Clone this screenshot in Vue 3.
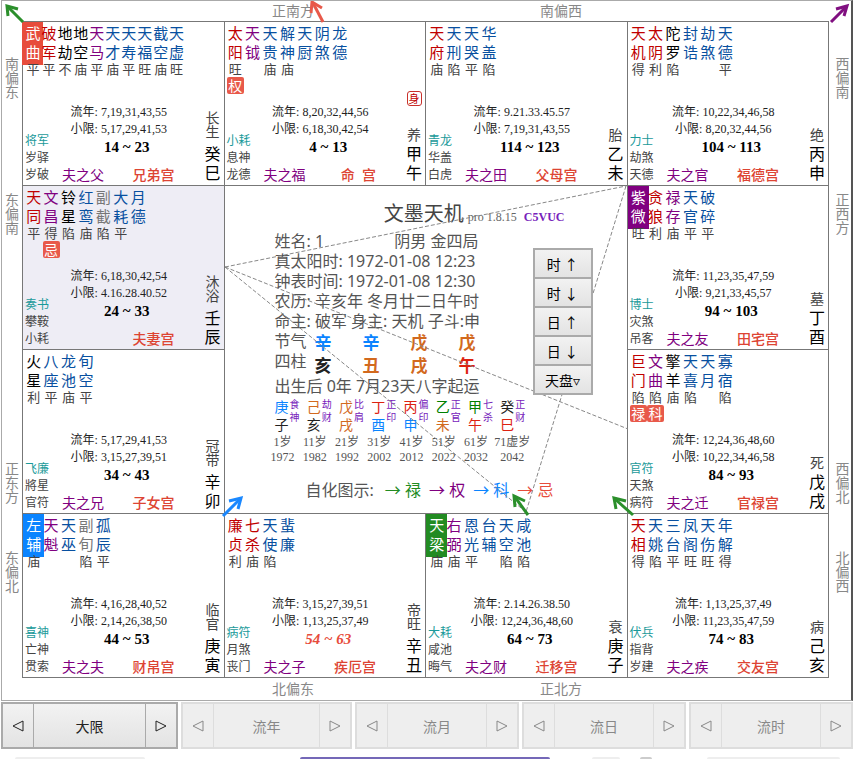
<script setup>
const parseStars = (text) =>
  text.split(' ').map((item) => {
    const [name, level, tone, mark] = item.split('/')
    return { chars: [...name], level, tone, mark }
  })

const palaces = [
  { area: 'si', stars: '武曲/平/hot-red 破军/平/red 地劫/不/black 地空/庙/black 天马/平/purple 天才/庙/blue 天寿/平/blue 天福/旺/blue 截空/庙/blue 天虚/旺/blue', years: '7,19,31,43,55', limits: '5,17,29,41,53', range: '14 ~ 23', gods: ['将军', '岁驿', '岁破'], relation: '夫之父', name: '兄弟宫', stage: '长生', stem: '癸巳' },
  { area: 'wu', stars: '太阳/旺/red/权 天钺//purple 天贵/庙/blue 解神/庙/blue 天厨//blue 阴煞//blue 龙德//blue', years: '8,20,32,44,56', limits: '6,18,30,42,54', range: '4 ~ 13', gods: ['小耗', '息神', '龙德'], relation: '夫之福', name: '命\u00a0\u00a0宫', stage: '养', stem: '甲午', body: true },
  { area: 'wei', stars: '天府/庙/red 天刑/陷/blue 天哭/平/blue 华盖/陷/blue', years: '9.21.33.45.57', limits: '7,19,31,43,55', range: '114 ~ 123', gods: ['青龙', '华盖', '白虎'], relation: '夫之田', name: '父母宫', stage: '胎', stem: '乙未' },
  { area: 'shen', stars: '天机/得/red 太阴/利/red 陀罗/陷/black 封诰//blue 劫煞//blue 天德/平/blue', years: '10,22,34,46,58', limits: '8,20,32,44,56', range: '104 ~ 113', gods: ['力士', '劫煞', '天德'], relation: '夫之官', name: '福德宫', stage: '绝', stem: '丙申' },
  { area: 'chen', stars: '天同/平/red 文昌/得/purple/忌 铃星/陷/black 红鸾/庙/blue 副截/陷/gray 大耗/平/blue 月德//blue', years: '6,18,30,42,54', limits: '4.16.28.40.52', range: '24 ~ 33', gods: ['奏书', '攀鞍', '小耗'], relation: '', name: '夫妻宫', stage: '沐浴', stem: '壬辰', active: true },
  { area: 'you', stars: '紫微/旺/hot-purple 贪狼/利/red 禄存/庙/purple 天官/平/blue 破碎/平/blue', years: '11,23,35,47,59', limits: '9,21,33,45,57', range: '94 ~ 103', gods: ['博士', '灾煞', '吊客'], relation: '夫之友', name: '田宅宫', stage: '墓', stem: '丁酉' },
  { area: 'mao', stars: '火星/利/black 八座/平/blue 龙池/庙/blue 旬空/平/blue', years: '5,17,29,41,53', limits: '3,15,27,39,51', range: '34 ~ 43', gods: ['飞廉', '將星', '官符'], relation: '夫之兄', name: '子女宫', stage: '冠带', stem: '辛卯' },
  { area: 'xu', stars: '巨门/陷/red/禄 文曲/陷/purple/科 擎羊/庙/black 天喜/陷/blue 天月//blue 寡宿/陷/blue', years: '12,24,36,48,60', limits: '10,22,34,46,58', range: '84 ~ 93', gods: ['官符', '天煞', '病符'], relation: '夫之迁', name: '官禄宫', stage: '死', stem: '戊戌' },
  { area: 'yin', stars: '左辅/庙/hot-blue 天魁//purple 天巫//blue 副旬/陷/gray 孤辰/平/blue', years: '4,16,28,40,52', limits: '2,14,26,38,50', range: '44 ~ 53', gods: ['喜神', '亡神', '贯索'], relation: '夫之夫', name: '财帛宫', stage: '临官', stem: '庚寅' },
  { area: 'chou', stars: '廉贞/利/red 七杀/庙/red 天使/陷/blue 蜚廉//blue', years: '3,15,27,39,51', limits: '1,13,25,37,49', range: '54 ~ 63', gods: ['病符', '月煞', '丧门'], relation: '夫之子', name: '疾厄宫', stage: '帝旺', stem: '辛丑', current: true },
  { area: 'zi', stars: '天梁/庙/hot-green 右弼/庙/purple 恩光/平/blue 台辅//blue 天空/陷/blue 咸池/陷/blue', years: '2.14.26.38.50', limits: '12,24,36,48,60', range: '64 ~ 73', gods: ['大耗', '咸池', '晦气'], relation: '夫之财', name: '迁移宫', stage: '衰', stem: '庚子' },
  { area: 'hai', stars: '天相/得/red 天姚/陷/blue 三台/平/blue 凤阁/旺/blue 天伤/旺/blue 年解/得/blue', years: '1,13,25,37,49', limits: '11,23,35,47,59', range: '74 ~ 83', gods: ['伏兵', '指背', '岁建'], relation: '夫之疾', name: '交友宫', stage: '病', stem: '己亥' },
].map((p) => ({ ...p, stars: parseStars(p.stars) }))

const pillars = [
  [['辛', 'metal'], ['亥', 'water']],
  [['辛', 'metal'], ['丑', 'earth']],
  [['戊', 'earth'], ['戌', 'earth']],
  [['戊', 'earth'], ['午', 'fire']],
]

const cycles = [
  { stem: ['庚', 'metal'], branch: ['子', 'water'], god: '食神', age: '1岁', year: 1972 },
  { stem: ['己', 'earth'], branch: ['亥', 'water'], god: '劫财', age: '11岁', year: 1982 },
  { stem: ['戊', 'earth'], branch: ['戌', 'earth'], god: '比肩', age: '21岁', year: 1992 },
  { stem: ['丁', 'fire'], branch: ['酉', 'metal'], god: '正印', age: '31岁', year: 2002 },
  { stem: ['丙', 'fire'], branch: ['申', 'metal'], god: '偏印', age: '41岁', year: 2012 },
  { stem: ['乙', 'wood'], branch: ['未', 'earth'], god: '正官', age: '51岁', year: 2022 },
  { stem: ['甲', 'wood'], branch: ['午', 'fire'], god: '七杀', age: '61岁', year: 2032 },
  { stem: ['癸', 'water'], branch: ['巳', 'fire'], god: '正财', age: '71虚岁', year: 2042 },
]

const adjusters = ['时 ↑', '时 ↓', '日 ↑', '日 ↓', '天盘▿']
const periods = ['大限', '流年', '流月', '流日', '流时']
const leftSides = ['南偏东', '东偏南', '正东方', '东偏北']
const rightSides = ['西偏南', '正西方', '西偏北', '北偏西']

const arrows = [
  { color: '#2b8f2b', line: 'M23 22L8 7', head: 'M8 16L7 6L18 9' },
  { color: '#e8594a', line: 'M323 22L313 3', head: 'M311 13L312 2L322 8' },
  { color: '#800f80', line: 'M831 22L846 7', head: 'M836 9L847 6L844 16' },
  { color: '#1a88ff', line: 'M223 516L240 499', head: 'M229 501L241 498L238 509' },
  { color: '#2b8f2b', line: 'M528 515L515 497', head: 'M515 507L514 496L525 501' },
  { color: '#2b8f2b', line: 'M633 515L615 499', head: 'M616 509L614 498L626 501' },
]
</script>

<template>
  <main class="page">
    <section class="board">
      <div class="edge edge-top"><span>正南方</span><span>南偏西</span></div>
      <div class="side side-left"><span v-for="s in leftSides" :key="s">{{ s }}</span></div>

      <div class="chart">
        <article v-for="p in palaces" :key="p.area" class="palace" :class="[p.area, { active: p.active }]">
          <div class="stars" :class="{ dense: p.stars.length > 9 }">
            <div v-for="(s, i) in p.stars" :key="i" class="star">
              <div class="star-name" :class="s.tone"><span v-for="(c, n) in s.chars" :key="n">{{ c }}</span></div>
              <span class="level">{{ s.level }}</span>
              <span v-if="s.mark" class="mark">{{ s.mark }}</span>
            </div>
          </div>
          <div class="foot">
            <div class="gods"><span v-for="g in p.gods" :key="g">{{ g }}</span></div>
            <div class="middle">
              <div class="dates"><span>流年: {{ p.years }}</span><span>小限: {{ p.limits }}</span></div>
              <div class="range" :class="{ current: p.current }">{{ p.range }}</div>
              <div class="names"><span class="relation">{{ p.relation }}</span><span class="palace-name">{{ p.name }}</span></div>
            </div>
            <div class="pole">
              <span v-if="p.body" class="body-mark">身</span>
              <span class="stage" :class="{ pair: p.stage.length > 1 }">{{ p.stage }}</span>
              <span class="stem">{{ p.stem }}</span>
            </div>
          </div>
        </article>

        <section class="center">
          <header class="title">
            <h1>文墨天机</h1><small>pro 1.8.15</small><strong>C5VUC</strong>
          </header>
          <div class="center-body">
            <div class="info">
              <p class="split"><span>姓名: 1</span><span>阴男 金四局</span></p>
              <p>真太阳时: 1972-01-08 12:23</p>
              <p>钟表时间: 1972-01-08 12:30</p>
              <p>农历: 辛亥年 冬月廿二日午时</p>
              <p>命主: 破军 身主: 天机 子斗:申</p>
              <div class="pillars">
                <div class="pillar-label"><span>节气</span><span>四柱</span></div>
                <div v-for="(p, i) in pillars" :key="i" class="pillar">
                  <span v-for="(c, n) in p" :key="n" :class="c[1]">{{ c[0] }}</span>
                </div>
              </div>
              <p>出生后 0年 7月23天八字起运</p>
              <div class="cycles">
                <div v-for="c in cycles" :key="c.year" class="cycle">
                  <div class="cycle-top">
                    <div class="cycle-pair"><span :class="c.stem[1]">{{ c.stem[0] }}</span><span :class="c.branch[1]">{{ c.branch[0] }}</span></div>
                    <span class="cycle-god">{{ c.god }}</span>
                  </div>
                  <span class="cycle-age">{{ c.age }}</span>
                  <span class="cycle-age">{{ c.year }}</span>
                </div>
              </div>
            </div>
            <div class="adjust">
              <button v-for="a in adjusters" :key="a" type="button">{{ a }}</button>
            </div>
          </div>
          <div class="legend">
            <span class="legend-label">自化图示:</span>
            <span class="lu">→ 禄</span><span class="quan">→ 权</span><span class="ke">→ 科</span><span class="ji">→ 忌</span>
          </div>
        </section>
      </div>

      <div class="side side-right"><span v-for="s in rightSides" :key="s">{{ s }}</span></div>
      <div class="edge edge-bottom"><span>北偏东</span><span>正北方</span></div>

      <svg class="overlay" viewBox="2 1 849 699" preserveAspectRatio="none" aria-hidden="true">
        <g fill="none" stroke="#888" stroke-width="1" stroke-dasharray="4 2">
          <path d="M225 267L626 186" />
          <path d="M225 267L628 429" />
          <path d="M225 267L526 512" />
          <path d="M626 186L526 512" />
        </g>
        <g v-for="(a, i) in arrows" :key="i" fill="none" :stroke="a.color" stroke-width="3">
          <path :d="a.line" /><path :d="a.head" />
        </g>
      </svg>
    </section>

    <nav class="periods">
      <div v-for="(p, i) in periods" :key="p" class="period">
        <button type="button" class="step" :disabled="i > 0" :aria-label="p + ' -'">
          <svg viewBox="0 0 12 14"><path d="M11 2L1 7L11 12Z" /></svg>
        </button>
        <button type="button" class="period-name" :disabled="i > 0">{{ p }}</button>
        <button type="button" class="step" :disabled="i > 0" :aria-label="p + ' +'">
          <svg viewBox="0 0 12 14"><path d="M1 2L11 7L1 12Z" /></svg>
        </button>
      </div>
    </nav>
    <div class="tabs"><i class="tab-a"></i><i class="tab-b"></i><i class="tab-c"></i><i class="tab-d"></i><i class="tab-e"></i></div>
  </main>
</template>

<style>
body {
  background: #fff;
  overflow: hidden;
}
</style>

<style scoped>
* {
  box-sizing: border-box;
}
.page {
  font-family: "Noto Sans", "Noto Sans CJK SC", sans-serif;
  font-weight: 400;
  color: #444;
  padding-left: 1px;
}
.board {
  position: relative;
  display: grid;
  grid-template-columns: 20px minmax(0, 1fr) 22px;
  grid-template-rows: 20px auto 22px;
  border: 1px solid #aaa;
  border-right: 2px solid #555;
}
.edge {
  grid-column: 2;
  display: grid;
  grid-template-columns: 1fr 2fr 2fr 1fr;
  align-items: center;
  padding-left: 3px;
  text-align: center;
  font-size: 14px;
  line-height: 20px;
  color: #888;
}
.edge span:first-child {
  grid-column: 2;
}
.side {
  grid-row: 2;
  display: flex;
  flex-direction: column;
  align-items: center;
  padding-top: 36px;
  font-size: 14px;
  line-height: 14px;
  color: #888;
}
.side-left {
  grid-column: 1;
}
.side-right {
  grid-column: 3;
  padding-left: 5px;
}
.side span {
  width: 14px;
  word-break: break-all;
}
.side span:nth-child(2) {
  margin-top: 94px;
}
.side span:nth-child(3) {
  margin-top: 227px;
}
.side span:nth-child(4) {
  margin-top: 47px;
}
.edge-bottom {
  grid-row: 3;
}
.chart {
  grid-row: 2;
  grid-column: 2;
  display: grid;
  grid-template-columns: repeat(4, minmax(0, 1fr));
  grid-auto-rows: minmax(163px, auto);
  grid-template-areas:
    "si wu wei shen"
    "chen mid mid you"
    "mao mid mid xu"
    "yin chou zi hai";
  gap: 1px;
  padding: 1px;
  background: #777;
}
.si { grid-area: si; }
.wu { grid-area: wu; }
.wei { grid-area: wei; }
.shen { grid-area: shen; }
.chen { grid-area: chen; }
.you { grid-area: you; }
.mao { grid-area: mao; }
.xu { grid-area: xu; }
.yin { grid-area: yin; }
.chou { grid-area: chou; }
.zi { grid-area: zi; }
.hai { grid-area: hai; }
.palace {
  display: flex;
  flex-direction: column;
  justify-content: space-between;
  background: #fff;
  isolation: isolate;
}
.palace.active {
  background: #eeedf5;
}
.stars {
  display: grid;
  grid-template-columns: repeat(11, minmax(0, 1fr));
  padding: 2px 7px 0 2px;
}
.stars.dense {
  grid-template-columns: repeat(12, minmax(0, 1fr));
}
.star {
  position: relative;
  display: flex;
  flex-direction: column;
  align-items: center;
}
.star-name {
  position: relative;
  display: flex;
  flex-direction: column;
  font-size: 15px;
  line-height: 19px;
}
.level {
  height: 15px;
  font-size: 13px;
  line-height: 15px;
  color: #444;
}
.mark {
  position: absolute;
  top: 100%;
  width: 17px;
  height: 17px;
  border-radius: 2px;
  background: #e8594a;
  color: #fff;
  font-size: 14px;
  line-height: 17px;
  text-align: center;
}
.red { color: #c00000; }
.black { color: #000; }
.purple { color: #800080; }
.blue { color: #0850a0; }
.gray { color: #777; }
[class*="hot-"] {
  color: #fff;
}
[class*="hot-"]::before {
  content: "";
  position: absolute;
  z-index: -1;
  top: -2px;
  left: -3px;
  width: 21px;
  height: 43px;
}
.hot-red::before { background: #e74c3c; }
.hot-purple::before { background: #800080; }
.hot-blue::before { background: #0a84ff; }
.hot-green::before { background: #228b22; }
.foot {
  display: flex;
  align-items: flex-end;
  padding: 0 3px 0 2px;
}
.gods {
  display: flex;
  flex-direction: column;
  flex: 0 0 24px;
  padding-bottom: 2px;
  font-size: 12px;
  line-height: 17px;
}
.gods span:first-child {
  color: #1a9a9a;
}
.middle {
  flex: 1;
  text-align: center;
}
.dates {
  display: flex;
  flex-direction: column;
  padding-right: 16px;
  font-family: "Liberation Serif", "Noto Sans CJK SC", serif;
  font-size: 12px;
  line-height: 17px;
  color: #222;
}
.range {
  margin-bottom: 9px;
  font-family: "Liberation Serif", serif;
  font-size: 15px;
  font-weight: 700;
  line-height: 18px;
  color: #000;
}
.range.current {
  font-style: italic;
  color: #e74c3c;
}
.names {
  display: flex;
  justify-content: space-between;
  padding: 0 30px 0 13px;
  font-size: 14px;
  line-height: 20px;
}
.relation {
  color: #800080;
}
.palace-name {
  font-weight: 500;
  color: #dd4433;
}
.pole {
  display: flex;
  flex-direction: column;
  align-items: center;
  flex: 0 0 16px;
  padding-bottom: 2px;
}
.stage {
  width: 14px;
  margin-bottom: 3px;
  font-size: 14px;
  line-height: 14px;
  word-break: break-all;
}
.stage.pair {
  margin-bottom: 6px;
}
.stem {
  width: 16px;
  font-size: 16px;
  line-height: 19px;
  word-break: break-all;
  color: #000;
}
.body-mark {
  width: 15px;
  height: 15px;
  margin-bottom: 22px;
  border: 1px solid #c9302c;
  border-radius: 3px;
  font-size: 11px;
  line-height: 13px;
  text-align: center;
  color: #c00000;
}
.center {
  grid-area: mid;
  padding: 15px 34px 0 50px;
  background: #fff;
  color: #555;
  font-size: 16px;
}
.title {
  display: flex;
  align-items: baseline;
  justify-content: flex-end;
  line-height: 24px;
  padding-right: 28px;
  font-family: "Liberation Serif", serif;
}
.title h1 {
  margin: 0 4px 0 0;
  font-family: "Noto Sans CJK SC", sans-serif;
  font-size: 20px;
  font-weight: 400;
  line-height: 24px;
  color: #444;
}
.title small {
  margin-right: 7px;
  font-size: 12px;
  color: #666;
}
.title strong {
  font-size: 12px;
  font-weight: 700;
  color: #7722bb;
}
.center-body {
  display: flex;
  justify-content: space-between;
  align-items: flex-start;
  margin-top: 2px;
}
.info {
  flex: 0 0 258px;
}
.info p {
  width: 204px;
  margin: 0;
  line-height: 20px;
  white-space: nowrap;
}
.split {
  display: flex;
  justify-content: space-between;
}
.pillars {
  display: flex;
  height: 45px;
}
.pillar-label {
  display: flex;
  flex-direction: column;
  width: 40px;
  line-height: 20px;
}
.pillar {
  display: flex;
  flex-direction: column;
  width: 48px;
  font-size: 17px;
  font-weight: 700;
  line-height: 23px;
}
.metal { color: #0a84ff; }
.water { color: #222; }
.earth { color: #d2691e; }
.fire { color: #dd2211; }
.wood { color: #008000; }
.cycles {
  display: grid;
  grid-template-columns: repeat(8, 1fr);
  margin-top: 2px;
}
.cycle {
  display: flex;
  flex-direction: column;
  min-width: 0;
}
.cycle-top {
  display: flex;
  height: 37px;
}
.cycle-pair {
  display: flex;
  flex-direction: column;
  width: 14px;
  font-size: 14px;
  line-height: 18px;
}
.cycle-god {
  width: 10px;
  margin-left: 1px;
  font-size: 10px;
  line-height: 13px;
  word-break: break-all;
  color: #7722bb;
}
.cycle-age {
  width: 24px;
  margin-left: -4px;
  display: flex;
  justify-content: center;
  white-space: nowrap;
  font-family: "Liberation Serif", "Noto Sans CJK SC", serif;
  font-size: 12px;
  line-height: 15px;
}
.cycle:last-child .cycle-age {
  width: 32px;
}
.adjust {
  position: relative;
  z-index: 2;
  display: flex;
  flex-direction: column;
  flex: 0 0 60px;
  margin-top: 17px;
  border: 1px solid #aaa;
}
.adjust button {
  height: 29px;
  padding: 0;
  border: 1px solid #aaa;
  background: linear-gradient(#f2f2f2, #e3e3e3);
  font: inherit;
  font-size: 14px;
  color: #000;
}
.legend {
  display: flex;
  gap: 8px;
  margin: 13px 0 0 31px;
  line-height: 24px;
  white-space: nowrap;
}
.legend-label {
  margin-right: 3px;
}
.lu { color: #228b22; }
.quan { color: #800080; }
.ke { color: #0a84ff; }
.ji { color: #e74c3c; }
.overlay {
  position: absolute;
  inset: 0;
  width: 100%;
  height: 100%;
  pointer-events: none;
}
.periods {
  display: grid;
  grid-template-columns: 177fr 171fr 164fr 164fr 164fr;
  gap: 3px;
  margin-top: 1px;
}
.period {
  display: flex;
  height: 47px;
  border: 1px solid #ddd;
}
.period:first-child {
  border-color: #aaa;
}
.period button {
  display: flex;
  align-items: center;
  justify-content: center;
  padding: 0;
  border: 1px solid #ddd;
  background: #eee;
  font: inherit;
  font-size: 14px;
  color: #888;
}
.period:first-child button {
  border-color: #aaa;
  background: linear-gradient(#f2f2f2, #e3e3e3);
  color: #222;
}
.period .step {
  flex: 0 0 32px;
}
.period .period-name {
  flex: 1;
  border-left: 0;
  border-right: 0;
}
.step svg {
  width: 12px;
  height: 14px;
  fill: none;
  stroke: currentColor;
}
.tabs {
  display: grid;
  grid-template-columns: 14fr 130fr 155fr 250fr 42fr 28fr 20fr 12fr 55fr 133fr 13fr;
  height: 2px;
  margin-top: 8px;
}
.tabs i {
  border-radius: 3px 3px 0 0;
  background: #eee;
}
.tab-a { grid-column: 2; }
.tab-b { grid-column: 4; }
.tab-c { grid-column: 6; }
.tab-d { grid-column: 8; }
.tab-e { grid-column: 10; }
.tabs .tab-b {
  background: #7468b8;
}
.tabs .tab-d {
  background: #ccc;
}
</style>
